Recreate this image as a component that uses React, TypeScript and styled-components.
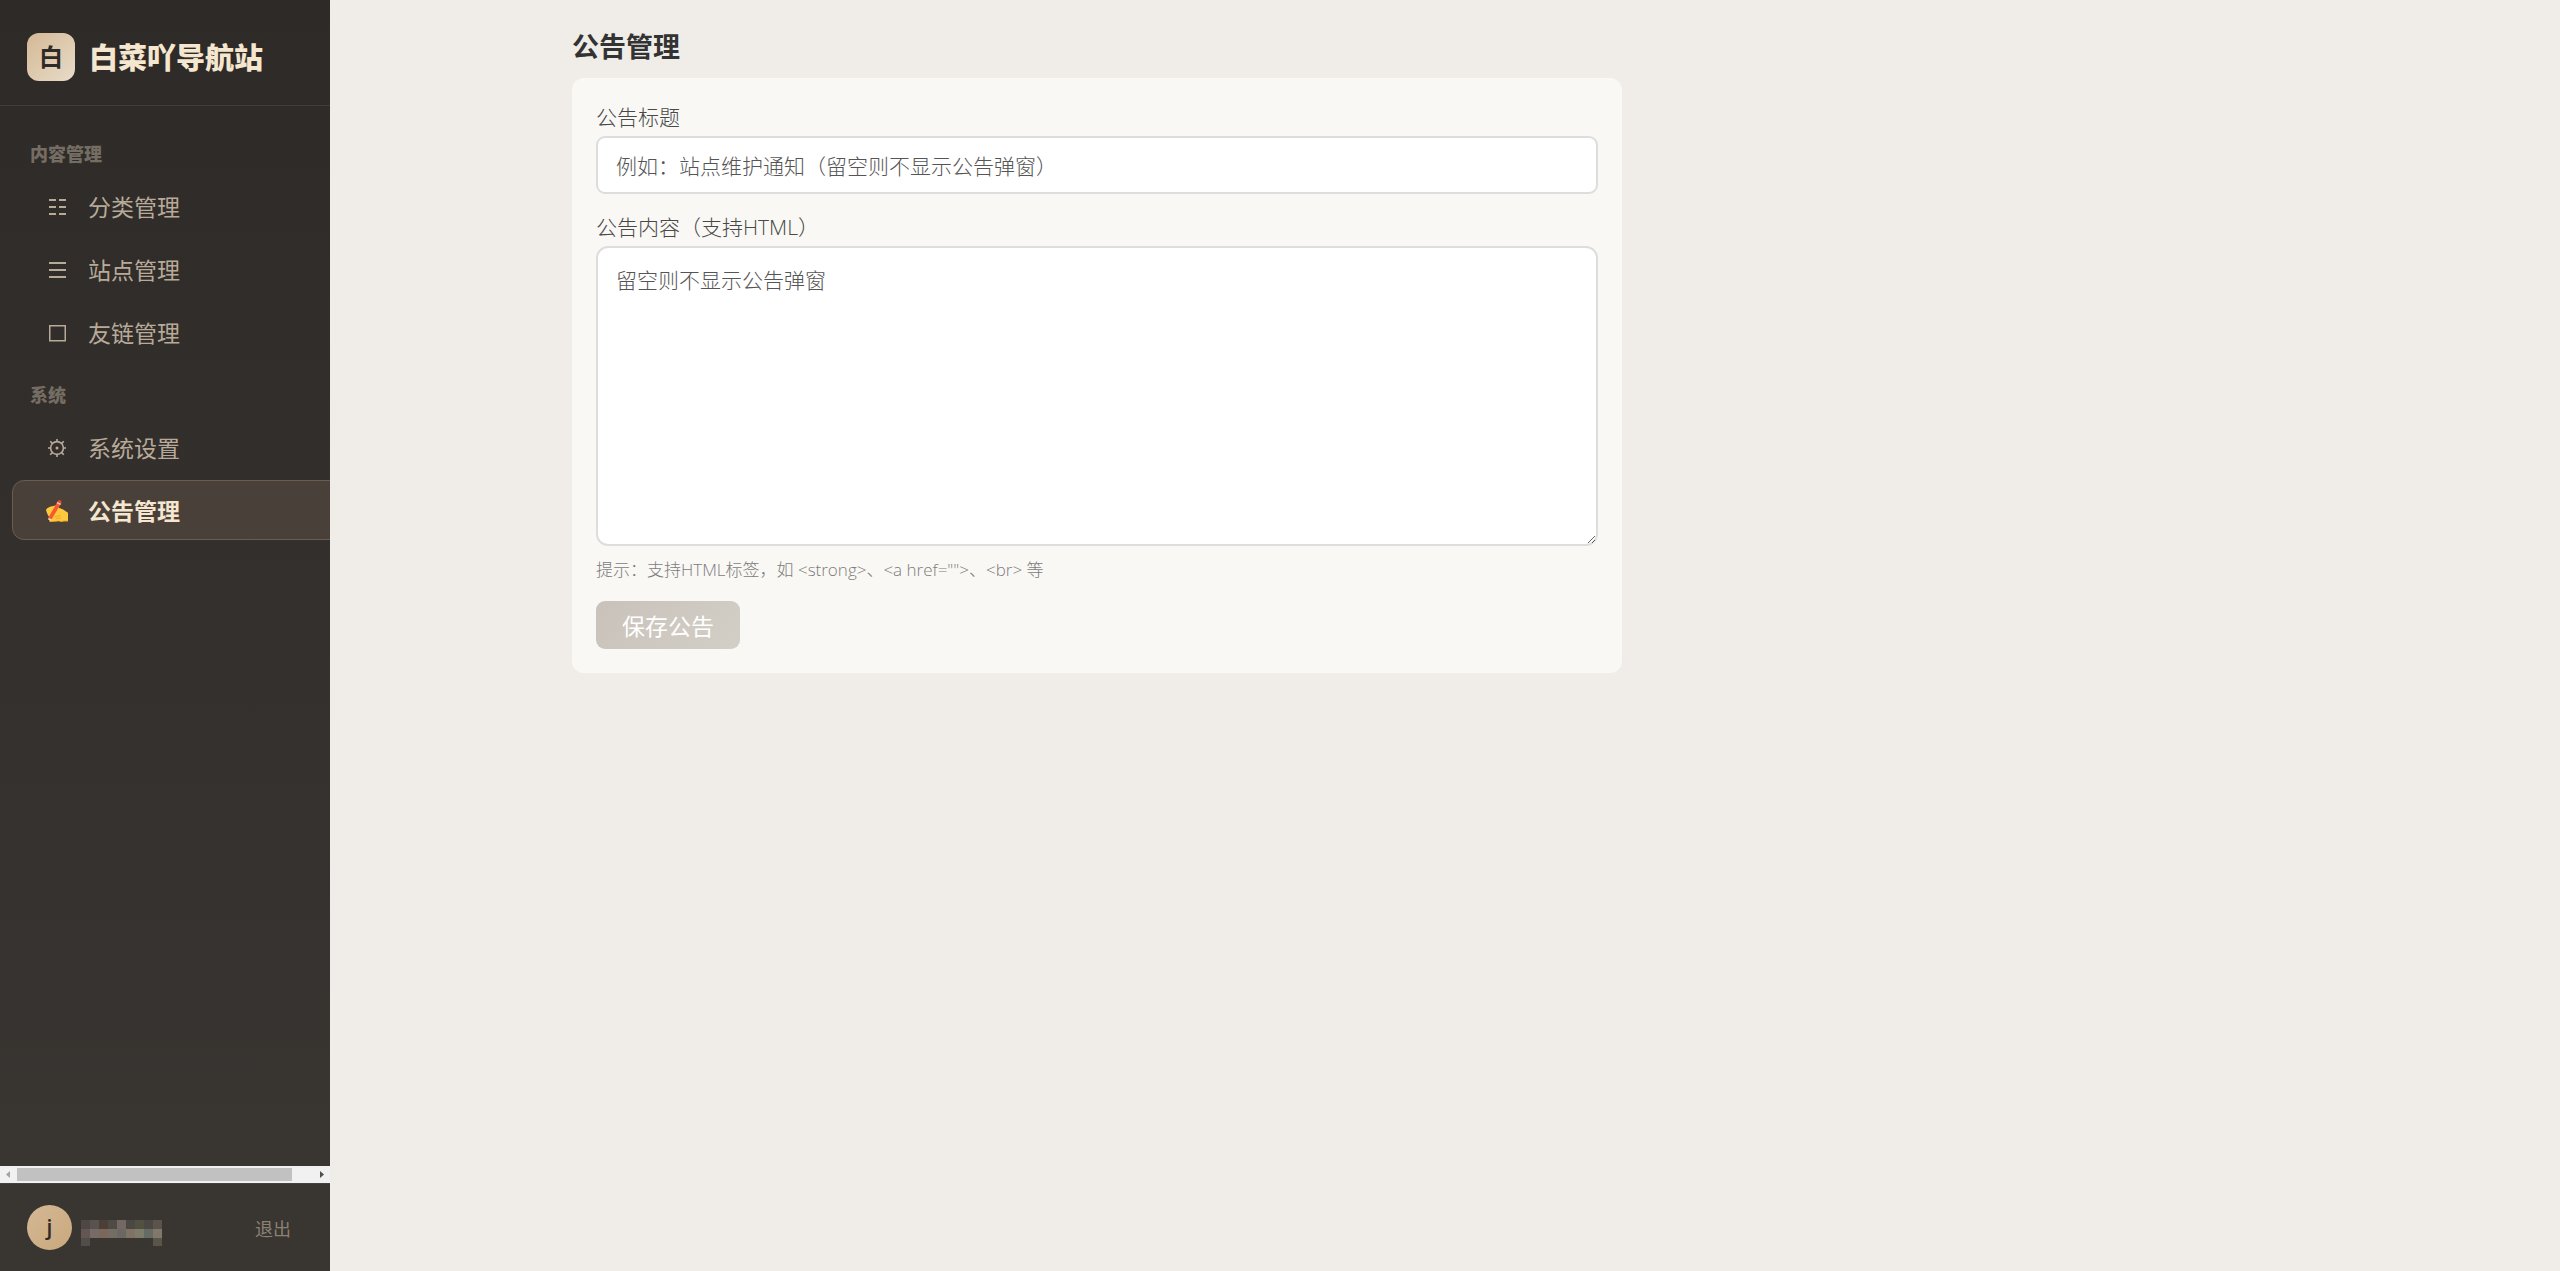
import React from "react";
import styled, { createGlobalStyle, css } from "styled-components";

const GlobalStyle = createGlobalStyle`
  *, *::before, *::after { box-sizing: border-box; }
  body {
    margin: 0;
    background: #f0ede8;
    color: #333;
    font-family: "Open Sans", "Noto Sans CJK SC", sans-serif;
  }
  button, input, textarea { font-family: inherit; }
`;

const Layout = styled.div`
  display: flex;
  min-height: 100vh;
`;

const Sidebar = styled.aside`
  display: flex;
  flex-direction: column;
  flex: 0 0 330px;
  height: 100vh;
  overflow: hidden;
  background: linear-gradient(180deg, #2d2a28 0%, #3a3632 100%);
`;

const Brand = styled.header`
  display: flex;
  align-items: center;
  gap: 14px;
  height: 106px;
  padding: 9px 27px 0;
  border-bottom: 1px solid #403d3a;
`;

const BrandMark = styled.span`
  display: grid;
  place-items: center;
  width: 48px;
  height: 48px;
  border-radius: 12px;
  background: linear-gradient(135deg, #d4b896 0%, #e8dcc8 100%);
  color: #2d2a28;
  font-size: 24px;
  font-weight: 700;
  line-height: 48px;
`;

const BrandName = styled.span`
  padding-top: 2px;
  color: #f5e6d0;
  font-size: 29px;
  font-weight: 900;
  line-height: 48px;
  white-space: nowrap;
`;

const Nav = styled.nav`
  flex: 1;
  padding-top: 36px;
`;

const NavLabel = styled.h2`
  margin: 0;
  padding-left: 30px;
  color: #756d63;
  font-size: 18px;
  font-weight: 900;
  line-height: 24px;
`;

const NavList = styled.ul`
  display: flex;
  flex-direction: column;
  gap: 3px;
  width: 354px;
  margin: 0 0 21px;
  padding: 10px 0 0 12px;
  list-style: none;
`;

const NavLink = styled.a<{ $active?: boolean }>`
  display: flex;
  align-items: center;
  gap: 16px;
  height: 60px;
  padding: 2px 0 0 29px;
  border: 1px solid transparent;
  border-radius: 12px;
  color: #b8aa98;
  font-size: 23px;
  line-height: 30px;
  text-decoration: none;
  ${({ $active }) =>
    $active &&
    css`
      border-color: #6b5c4f;
      background: #4a403a;
      color: #f5e6d0;
      font-weight: 700;
    `}
`;

const IconSlot = styled.span`
  display: grid;
  place-items: center;
  width: 30px;
  height: 30px;
`;

const ScrollTrack = styled.div`
  display: flex;
  align-items: center;
  justify-content: space-between;
  height: 17px;
  background: #f1f1f1;
`;

const ScrollArrow = styled.svg`
  flex: 0 0 17px;
  height: 17px;
`;

const ScrollRail = styled.div`
  flex: 1;
`;

const ScrollThumb = styled.div`
  width: 93%;
  height: 13px;
  background: #c1c1c1;
`;

const Account = styled.footer`
  display: flex;
  align-items: center;
  gap: 9px;
  height: 88px;
  padding: 0 39px 0 27px;
  border-top: 1px solid #46433f;
  background: #393530;
`;

const Avatar = styled.span`
  display: grid;
  place-items: center;
  width: 45px;
  height: 45px;
  border-radius: 50%;
  background: linear-gradient(135deg, #d4b896 0%, #c9a87c 100%);
  color: #2d2a28;
  font-size: 21px;
  font-weight: 600;
  line-height: 45px;
`;

const LogoutButton = styled.button`
  margin-left: auto;
  padding: 2px 0 0;
  border: 0;
  background: none;
  color: #8a8175;
  font-size: 18px;
  line-height: 24px;
`;

const Main = styled.main`
  flex: 1;
  min-width: 0;
  padding: 26px 24px 24px 242px;
`;

const PageTitle = styled.h1`
  margin: 0 0 10px;
  font-size: 27px;
  font-weight: 700;
  line-height: 42px;
`;

const Card = styled.form`
  display: flex;
  flex-direction: column;
  max-width: 1050px;
  padding: 23px 24px 24px;
  border-radius: 12px;
  background: #f9f8f4;
`;

const FieldLabel = styled.label`
  padding-bottom: 3px;
  color: #484848;
  font-size: 21px;
  font-weight: 300;
  line-height: 32px;
`;

const TextInput = styled.input`
  height: 58px;
  margin-bottom: 17px;
  padding: 2px 18px 0;
  border: 2px solid #ddd;
  border-radius: 9px;
  background: #fff;
  font-size: 21px;
  font-weight: 300;
  &::placeholder { color: #555; }
`;

const TextArea = styled.textarea`
  height: 300px;
  padding: 16px 18px;
  border: 2px solid #ddd;
  border-radius: 12px;
  background: #fff;
  font-size: 21px;
  font-weight: 300;
  line-height: 32px;
  resize: vertical;
  &::placeholder { color: #555; }
`;

const Hint = styled.p`
  margin: 12px 0 19px;
  color: #7c7c7c;
  font-size: 17px;
  font-weight: 300;
  line-height: 24px;
`;

const SaveButton = styled.button`
  align-self: flex-start;
  height: 48px;
  padding: 0 26px;
  border: 0;
  border-radius: 9px;
  background: linear-gradient(135deg, #c8c2ba 0%, #d4cfc6 100%);
  color: #fff;
  font-size: 23px;
  font-weight: 400;
`;

const CategoryIcon = () => (
  <svg width="17" height="17" viewBox="0 0 17 17" fill="currentColor" aria-hidden="true">
    <path d="M0 0h7v2H0zM10 0h7v2h-7zM0 7h7v2H0zM10 7h7v2h-7zM0 14h7v2H0zM10 14h7v2h-7z" />
  </svg>
);

const SitesIcon = () => (
  <svg width="17" height="17" viewBox="0 0 17 17" fill="currentColor" aria-hidden="true">
    <path d="M0 0h17v2H0zM0 7h17v2H0zM0 14h17v2H0z" />
  </svg>
);

const LinksIcon = () => (
  <svg width="17" height="17" viewBox="0 0 17 17" fill="none" stroke="currentColor" strokeWidth="1.5" aria-hidden="true">
    <path d="M.75.75h15.5v15H.75z" />
  </svg>
);

const GearIcon = () => (
  <svg width="18" height="18" viewBox="0 0 18 18" fill="none" stroke="currentColor" strokeWidth="1.6" aria-hidden="true">
    <circle cx="9" cy="9" r="6.4" />
    <circle cx="9" cy="9" r="1.5" fill="currentColor" stroke="none" />
    <path d="M9 0v2.5M9 15.5V18M0 9h2.5M15.5 9H18M2.2 2.2l2.4 2.4M13.4 13.4l2.4 2.4M15.8 2.2l-2.4 2.4M4.6 13.4l-2.4 2.4" />
  </svg>
);

const WritingIcon = () => (
  <svg width="22" height="22" viewBox="0 0 66 66" aria-hidden="true">
    <path d="M0 30Q1 24 12 20L31 16Q37 16 38 23L50 28 66 38V64H54Q46 67 38 63L12 66 9 62 15 57Q5 49 0 30Z" fill="#ffc83d" />
    <path d="M27 50L43 47M29 56L45 54M66 63H54Q46 67 38 63L12 66" fill="none" stroke="#e09a1c" strokeWidth="2" />
    <path d="M35 4L46 9 17 58 7 53Z" fill="#f9582e" />
    <path d="M37 1Q40-2 45 2 48 4 46 10L35 5Z" fill="#e84225" />
    <path d="M34 6L45 11 43 15 32 10Z" fill="#cbd0d5" />
    <path d="M7 53L17 58 7 65Z" fill="#f3d0c0" />
    <path d="M7 59L11 63 5 66Z" fill="#24201f" />
  </svg>
);

const MASK_ROWS = [
  ["#4f4743", "#5a524d", "#4b3f38", "#504a45", "#736864", "#4b4742", "#525043", "#4b4743", "#5a544d"],
  ["#655653", "#756c68", "#7c675b", "#746d61", "#6c6764", "#807265", "#7c7c69", "#636b62", "#827869"],
  ["#514d48", "", "", "", "", "", "", "", "#59554a"],
];

const MaskedName = () => (
  <svg width="81" height="36" viewBox="0 -10 81 36" shapeRendering="crispEdges" role="img" aria-label="用户名">
    {MASK_ROWS.map((row, y) =>
      row.map((fill, x) => fill && <rect key={`${x}-${y}`} x={x * 9} y={y * 9} width="9" height="9" fill={fill} />)
    )}
  </svg>
);

const SECTIONS = [
  {
    title: "内容管理",
    items: [
      { text: "分类管理", Icon: CategoryIcon },
      { text: "站点管理", Icon: SitesIcon },
      { text: "友链管理", Icon: LinksIcon },
    ],
  },
  {
    title: "系统",
    items: [
      { text: "系统设置", Icon: GearIcon },
      { text: "公告管理", Icon: WritingIcon, active: true },
    ],
  },
];

export default function App() {
  return (
    <Layout lang="zh-CN">
      <GlobalStyle />
      <Sidebar>
        <Brand>
          <BrandMark>白</BrandMark>
          <BrandName>白菜吖导航站</BrandName>
        </Brand>
        <Nav>
          {SECTIONS.map((section) => (
            <React.Fragment key={section.title}>
              <NavLabel>{section.title}</NavLabel>
              <NavList>
                {section.items.map(({ text, Icon, active }: { text: string; Icon: React.FC; active?: boolean }) => (
                  <li key={text}>
                    <NavLink href="#" $active={active} aria-current={active ? "page" : undefined}>
                      <IconSlot><Icon /></IconSlot>
                      {text}
                    </NavLink>
                  </li>
                ))}
              </NavList>
            </React.Fragment>
          ))}
        </Nav>
        <ScrollTrack aria-hidden="true">
          <ScrollArrow width="17" viewBox="0 0 17 17"><path d="M10 5v7L6 8.5z" fill="#a3a3a3" /></ScrollArrow>
          <ScrollRail><ScrollThumb /></ScrollRail>
          <ScrollArrow width="17" viewBox="0 0 17 17"><path d="M7 5v7l4-3.5z" fill="#505050" /></ScrollArrow>
        </ScrollTrack>
        <Account>
          <Avatar>j</Avatar>
          <MaskedName />
          <LogoutButton type="button">退出</LogoutButton>
        </Account>
      </Sidebar>
      <Main>
        <PageTitle>公告管理</PageTitle>
        <Card onSubmit={(event) => event.preventDefault()}>
          <FieldLabel htmlFor="notice-title">公告标题</FieldLabel>
          <TextInput id="notice-title" type="text" placeholder="例如：站点维护通知（留空则不显示公告弹窗）" />
          <FieldLabel htmlFor="notice-body">公告内容（支持HTML）</FieldLabel>
          <TextArea id="notice-body" placeholder="留空则不显示公告弹窗" />
          <Hint>{'提示：支持HTML标签，如 <strong>、<a href="">、<br> 等'}</Hint>
          <SaveButton type="submit">保存公告</SaveButton>
        </Card>
      </Main>
    </Layout>
  );
}
